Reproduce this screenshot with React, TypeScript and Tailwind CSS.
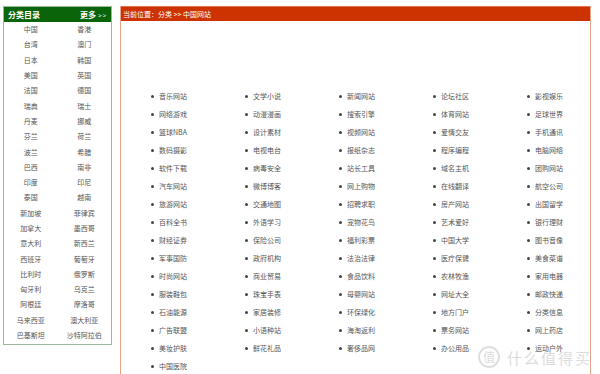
import React from "react";

const left = [
  ["中国", "香港"], ["台湾", "澳门"], ["日本", "韩国"], ["美国", "英国"], ["法国", "德国"],
  ["瑞典", "瑞士"], ["丹麦", "挪威"], ["芬兰", "荷兰"], ["波兰", "希腊"], ["巴西", "南非"],
  ["印度", "印尼"], ["泰国", "越南"], ["新加坡", "菲律宾"], ["加拿大", "墨西哥"], ["意大利", "新西兰"],
  ["西班牙", "葡萄牙"], ["比利时", "俄罗斯"], ["匈牙利", "乌克兰"], ["阿根廷", "摩洛哥"], ["马来西亚", "澳大利亚"],
  ["巴基斯坦", "沙特阿拉伯"],
];

const items = [
  "音乐网站", "文学小说", "新闻网站", "论坛社区", "影视娱乐",
  "网络游戏", "动漫漫画", "搜索引擎", "体育网站", "足球世界",
  "篮球NBA", "设计素材", "视频网站", "爱情交友", "手机通讯",
  "数码摄影", "电视电台", "报纸杂志", "程序编程", "电脑网络",
  "软件下载", "病毒安全", "站长工具", "域名主机", "团购网站",
  "汽车网站", "微博博客", "网上购物", "在线翻译", "航空公司",
  "旅游网站", "交通地图", "招聘求职", "房产网站", "出国留学",
  "百科全书", "外语学习", "宠物花鸟", "艺术爱好", "银行理财",
  "财经证券", "保险公司", "福利彩票", "中国大学", "图书音像",
  "军事国防", "政府机构", "法治法律", "医疗保健", "美食菜谱",
  "时尚网站", "商业贸易", "食品饮料", "农林牧渔", "家用电器",
  "服装鞋包", "珠宝手表", "母婴网站", "网址大全", "邮政快递",
  "石油能源", "家居装修", "环保绿化", "地方门户", "分类信息",
  "广告联盟", "小语种站", "海淘返利", "票务网站", "网上药店",
  "美妆护肤", "鲜花礼品", "奢侈品网", "办公用品", "运动户外",
  "中国医院",
];

export default function App() {
  return (
    <div
      className="relative w-[600px] h-[374px] overflow-hidden bg-white"
      style={{ fontFamily: '"Noto Sans CJK SC", "Noto Sans", sans-serif' }}
    >
      <div className="flex items-start pt-[6px] pl-[3px] gap-[8px]">
        {/* left panel */}
        <div className="w-[109px] border border-[#9cb89c] pb-[1px]">
          <div className="h-[15px] bg-[#0a650a] flex items-center justify-between px-[4px] text-white font-bold text-[8px] leading-none">
            <span>分类目录</span>
            <span>
              更多<span className="text-[6px] font-normal tracking-[1px]"> &gt;&gt;</span>
            </span>
          </div>
          <div>
            {left.map(([a, b]) => (
              <div key={a} className="grid grid-cols-2 h-[15.3px] items-center text-[7px] leading-none text-[#555]">
                <span className="text-center">{a}</span>
                <span className="text-center">{b}</span>
              </div>
            ))}
          </div>
        </div>

        {/* right panel */}
        <div className="w-[471px] h-[400px] border-l border-r border-[#e7a58c]">
          <div className="h-[15px] bg-[#cc3300] border-t border-[#e0704a] flex items-center px-[2px] text-white text-[7px] leading-none">
            当前位置：分类 &gt;&gt; 中国网站
          </div>
          <div className="pt-[66px] grid grid-cols-[repeat(5,94px)]">
            {items.map((t) => (
              <div key={t} className="h-[18px] flex items-center text-[7px] leading-none text-[#555]">
                <span className="ml-[30px] w-[3px] h-[3px] rounded-full bg-[#444]" />
                <span className="ml-[5px]">{t}</span>
              </div>
            ))}
          </div>
        </div>
      </div>

      {/* watermark */}
      <div className="absolute left-[478px] top-[346px] flex items-center gap-[7px] text-[#d4d4d4] opacity-80 pointer-events-none whitespace-nowrap">
        <span className="shrink-0 w-[22px] h-[22px] rounded-full border-[2px] border-[#d8d8d8] flex items-center justify-center text-[12px] leading-none">
          值
        </span>
        <span className="text-[15px] leading-none tracking-[2px]">什么值得买</span>
      </div>
    </div>
  );
}
